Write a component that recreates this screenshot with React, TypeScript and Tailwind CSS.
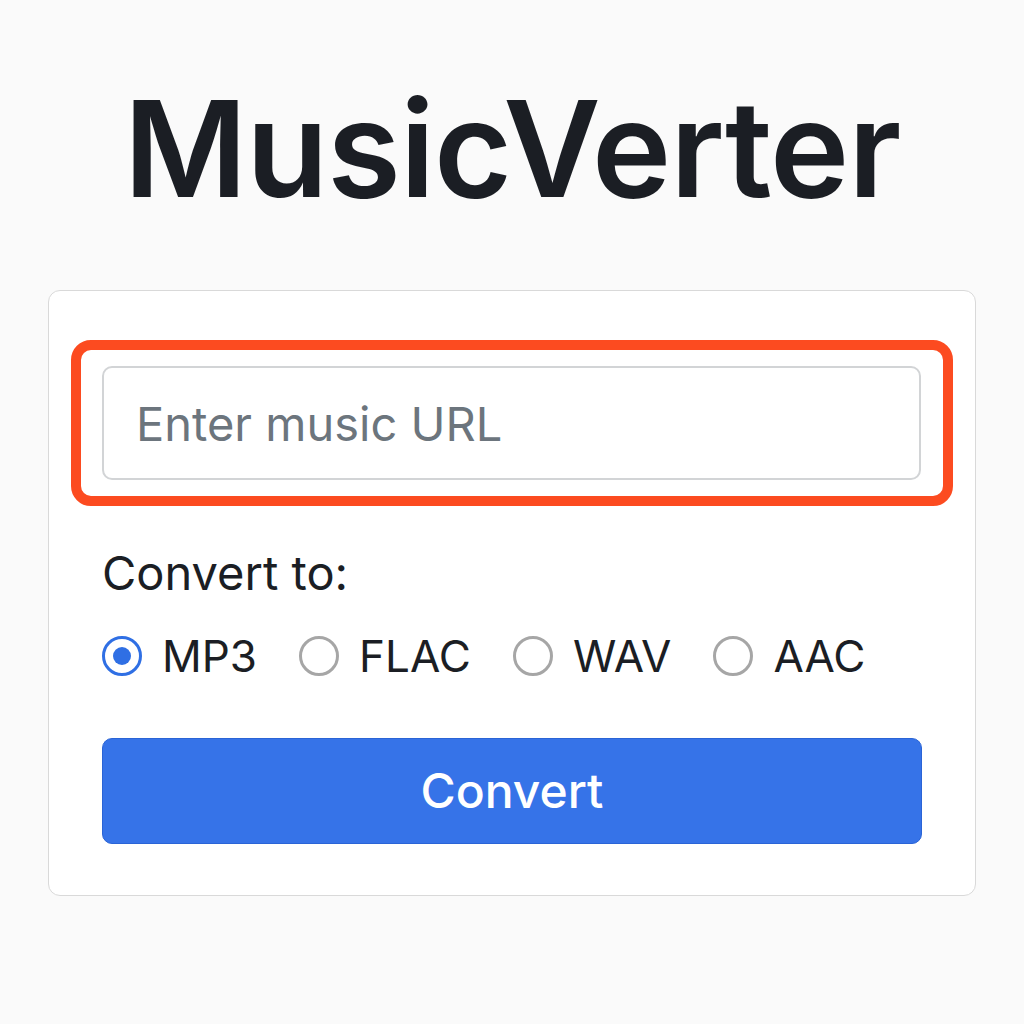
import { useState } from "react";

const formats = ["MP3", "FLAC", "WAV", "AAC"];

export default function App() {
  const [format, setFormat] = useState("MP3");

  return (
    <div className="min-h-screen bg-[#fafafa] font-['Inter','Liberation_Sans',sans-serif]">
      <div className="flex flex-col items-center pt-[64px]">
        <h1 className="text-[134px] leading-[168px] font-semibold tracking-[-1px] text-[#1b1e24]">
          MusicVerter
        </h1>
      </div>

      <div className="mx-[48px] mt-[58px] rounded-[12px] border border-[#d9d9d9] bg-white px-[53px] pt-[49px] pb-[51px]">
        {/* highlighted input */}
        <div className="-mx-[31px] rounded-[20px] border-[10px] border-[#fc4b20] py-[16px] pl-[21px] pr-[22px]">
          <input
            type="text"
            placeholder="Enter music URL"
            className="h-[114px] w-full rounded-[10px] border-2 border-[#d2d4d6] bg-white px-[32px] text-[47px] text-[#1b1e24] outline-none placeholder:text-[#6c757d]"
          />
        </div>

        <div className="mt-[38px] text-[47px] leading-[58px] text-[#1b1e24]">Convert to:</div>

        <div className="mt-[26px] flex items-center">
          {formats.map((f, i) => (
            <label
              key={f}
              className={`flex cursor-pointer items-center ${i === 0 ? "" : "ml-[42px]"}`}
              onClick={() => setFormat(f)}
            >
              <span
                className={`flex h-[40px] w-[40px] items-center justify-center rounded-full border-[3px] ${
                  format === f ? "border-[#2f6fe4]" : "border-[#a6a6a6]"
                }`}
              >
                {format === f && <span className="h-[18px] w-[18px] rounded-full bg-[#2f6fe4]" />}
              </span>
              <span className="ml-[20px] text-[44px] leading-[56px] text-[#1b1e24]">{f}</span>
            </label>
          ))}
        </div>

        <button className="mt-[54px] h-[106px] w-full rounded-[10px] border border-[#2a64d6] bg-[#3673e8] text-[48px] font-medium text-white">
          Convert
        </button>
      </div>
    </div>
  );
}
